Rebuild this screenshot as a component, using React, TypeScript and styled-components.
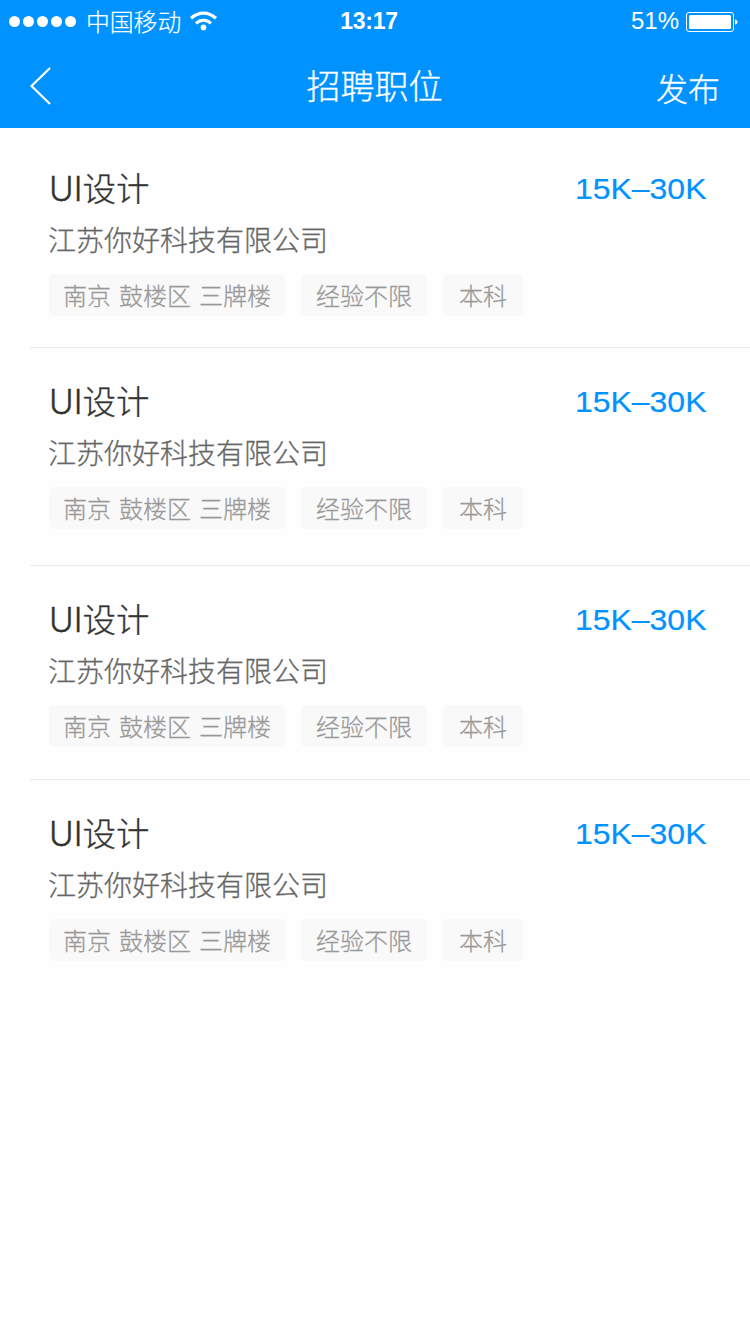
import React from 'react';
import styled, { createGlobalStyle } from 'styled-components';

const GlobalStyle = createGlobalStyle`
  * { box-sizing: border-box; }
  body {
    margin: 0;
    background: #fefefe;
    font-family: "Noto Sans CJK SC", sans-serif;
    font-weight: 300;
  }
`;

const Screen = styled.div`
  width: 750px;
  min-height: 1334px;
  background: #fefefe;
`;

const Header = styled.header`
  height: 128px;
  background: #0093ff;
  color: #fff;
`;

const StatusBar = styled.div`
  display: grid;
  grid-template-columns: 1fr auto 1fr;
  align-items: center;
  height: 43px;
  padding: 0 12px 0 9px;
`;

const Carrier = styled.div`
  display: flex;
  align-items: center;
  height: 43px;
`;

const Dots = styled.div`
  display: flex;
  gap: 3px;
  margin-right: 10px;
`;

const Dot = styled.i`
  width: 11px;
  height: 11px;
  border-radius: 50%;
  background: #fff;
`;

const CarrierName = styled.span`
  margin-right: 9px;
  padding-bottom: 2px;
  font-size: 23.8px;
  line-height: 40px;
  -webkit-text-stroke: 0.2px;
`;

const Clock = styled.time`
  margin-left: -9px;
  font: bold 23px/43px "Liberation Sans", sans-serif;
  letter-spacing: -0.3px;
`;

const Power = styled.div`
  display: flex;
  justify-content: flex-end;
  align-items: center;
  gap: 7px;
  font: 400 24px/41px "Liberation Sans", sans-serif;

  svg { margin-top: 1px; }
`;

const Percent = styled.span`
  padding-bottom: 2px;
`;

const NavBar = styled.nav`
  display: grid;
  grid-template-columns: 1fr auto 1fr;
  align-items: center;
  height: 85px;
  padding: 0 30px 0 29px;
`;

const BackButton = styled.button`
  display: flex;
  padding: 0;
  border: 0;
  background: none;
`;

const NavTitle = styled.h1`
  margin: 0;
  padding-bottom: 1px;
  font-size: 34px;
  font-weight: 300;
  line-height: 50px;
  -webkit-text-stroke: 0.3px;
`;

const Publish = styled.button`
  justify-self: end;
  padding: 2px 0 0;
  border: 0;
  background: none;
  color: #fff;
  font: 300 32px/48px "Noto Sans CJK SC", sans-serif;
  -webkit-text-stroke: 0.3px;
`;

const List = styled.main`
  padding: 7px 0 0 30px;
`;

const Job = styled.article<{ $gap: number }>`
  padding: 27px 44px ${(p) => p.$gap}px 19px;
  border-bottom: 1px solid #ebebeb;

  &:last-child { border-bottom: 0; }
`;

const JobHead = styled.div`
  display: flex;
  justify-content: space-between;
  align-items: flex-start;
  height: 51px;
`;

const JobTitle = styled.h2`
  margin: 0;
  padding-top: 2px;
  color: #333;
  font-family: Inter, "Noto Sans CJK SC", sans-serif;
  font-size: 33.5px;
  font-weight: 300;
  line-height: 50px;
  -webkit-text-stroke: 0.3px;
`;

const Salary = styled.span`
  padding-top: 2px;
  color: #0093ff;
  font: 400 30px/50px "Liberation Sans", sans-serif;
  -webkit-text-stroke: 0.2px;
  transform: scaleX(1.065);
  transform-origin: right center;
`;

const Company = styled.p`
  margin: 5px 0 14px -1px;
  color: #666;
  font-size: 28px;
  line-height: 42px;
  -webkit-text-stroke: 0.3px;
`;

const Tags = styled.div`
  display: flex;
  gap: 16px;
`;

const Tag = styled.span<{ $width: number }>`
  width: ${(p) => p.$width}px;
  height: 42px;
  border-radius: 5px;
  background: #f9f9f9;
  color: #999;
  font-size: 24px;
  line-height: 42px;
  text-align: center;
  white-space: nowrap;
  word-spacing: 2.7px;
  -webkit-text-stroke: 0.3px;
`;

const tags = [
  { label: '南京 鼓楼区 三牌楼', width: 236 },
  { label: '经验不限', width: 126 },
  { label: '本科', width: 80 },
];

const jobs = [31, 36, 32, 32].map((gap, id) => ({
  id,
  gap,
  title: 'UI设计',
  salary: '15K–30K',
  company: '江苏你好科技有限公司',
}));

function WifiIcon() {
  return (
    <svg width="28" height="22" viewBox="0 0 28 22" fill="none" stroke="#fff">
      <path d="M1 7.200C8.500 .3 18.500 .3 26 7.200" strokeWidth="3.200" />
      <path d="M6 12.300C10.500 8.300 16.500 8.300 21 12.300" strokeWidth="3" />
      <circle cx="13.500" cy="16.400" r="2.800" fill="#fff" stroke="none" />
    </svg>
  );
}

function BatteryIcon() {
  return (
    <svg width="52" height="20" viewBox="0 0 52 20">
      <rect x=".5" y=".5" width="47" height="19" rx="2.5" fill="none" stroke="#fff" />
      <rect x="3" y="3" width="42" height="14" rx="1.5" fill="#fff" />
      <path d="M49 7.500c3.500 .5 3.500 4.500 0 5z" fill="#fff" />
    </svg>
  );
}

export default function App() {
  return (
    <Screen>
      <GlobalStyle />
      <Header>
        <StatusBar>
          <Carrier>
            <Dots>
              {[0, 1, 2, 3, 4].map((n) => <Dot key={n} />)}
            </Dots>
            <CarrierName>中国移动</CarrierName>
            <WifiIcon />
          </Carrier>
          <Clock>13:17</Clock>
          <Power>
            <Percent>51%</Percent>
            <BatteryIcon />
          </Power>
        </StatusBar>
        <NavBar>
          <BackButton aria-label="返回">
            <svg width="22" height="38" viewBox="0 0 22 38" fill="none" stroke="#fff" strokeWidth="2.2">
              <path d="M21 1 2.500 19 21 37" />
            </svg>
          </BackButton>
          <NavTitle>招聘职位</NavTitle>
          <Publish>发布</Publish>
        </NavBar>
      </Header>
      <List>
        {jobs.map((job) => (
          <Job key={job.id} $gap={job.gap}>
            <JobHead>
              <JobTitle>{job.title}</JobTitle>
              <Salary>{job.salary}</Salary>
            </JobHead>
            <Company>{job.company}</Company>
            <Tags>
              {tags.map((tag) => (
                <Tag key={tag.label} $width={tag.width}>{tag.label}</Tag>
              ))}
            </Tags>
          </Job>
        ))}
      </List>
    </Screen>
  );
}
